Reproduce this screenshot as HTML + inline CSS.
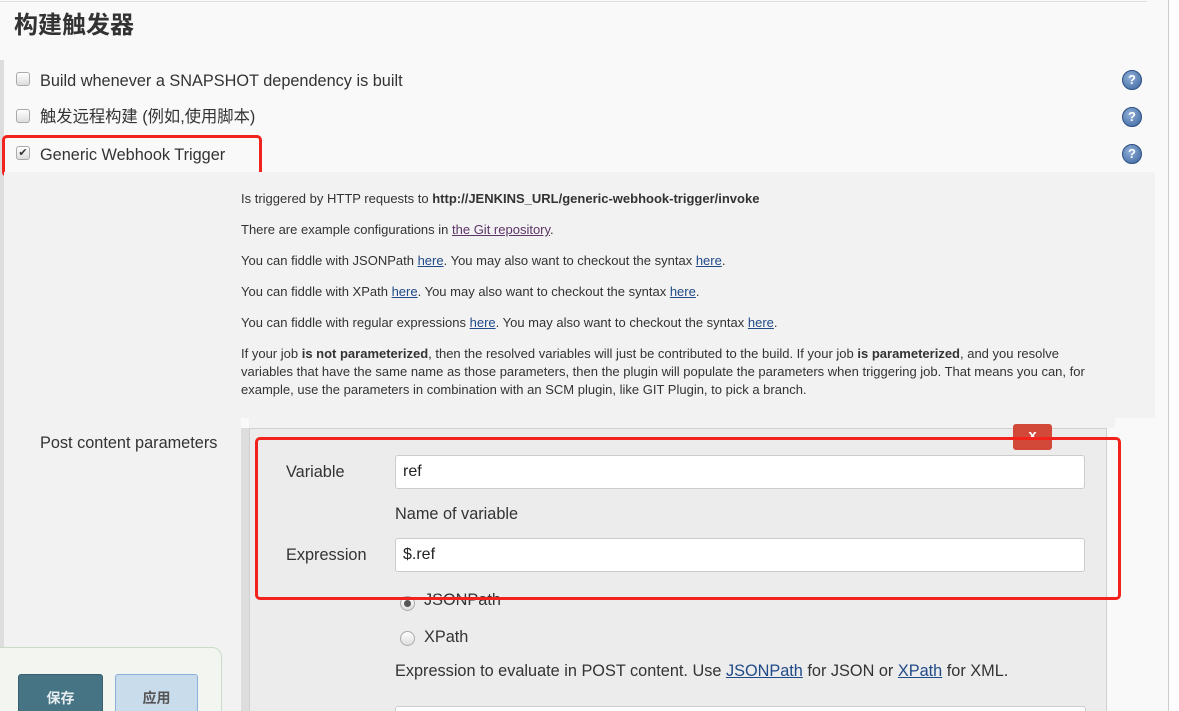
<!DOCTYPE html>
<html style="overflow:hidden;height:711px"><head><meta charset="utf-8"><style>
body{margin:0;width:1179px;height:711px;overflow:hidden;background:#f9f9f9;font-family:"Liberation Sans","Noto Sans CJK SC",sans-serif;color:#333;position:relative}
.a{position:absolute;white-space:nowrap;line-height:20px}
.cb{position:absolute;width:12px;height:12px;border:1px solid #aaa;border-radius:3px;background:linear-gradient(#fff,#ddd)}
.help{position:absolute;width:18px;height:18px;border-radius:50%;background:radial-gradient(circle at 40% 35%,#8fb0d8,#3a629c);border:1px solid #2d4f80;color:#fff;font:bold 13px "Liberation Sans",sans-serif;text-align:center;line-height:18px}
.h{font-size:13px;color:#333}
a{color:#204a87;text-decoration:underline}
.inp{position:absolute;left:395px;width:690px;height:34px;background:#fff;border:1px solid #ccc;border-radius:3px;font-size:16px;line-height:32px;padding-left:7px;box-sizing:border-box;color:#222}
.rad{position:absolute;width:13px;height:13px;border-radius:50%;border:1px solid #aaa;background:linear-gradient(#fff,#ddd)}
.t{font-size:16.3px}
</style></head><body>
<div class="a" style="left:0;top:1px;width:1147px;height:1px;background:#ddd"></div>
<div class="a" style="left:1168px;top:0;width:1px;height:711px;background:#ccc"></div>
<div class="a" style="left:1169px;top:0;width:10px;height:711px;background:#fdfdfd"></div>
<div class="a" style="left:0;top:60px;width:4px;height:651px;background:#ddd"></div>
<div class="a" style="left:14px;top:12px;font-size:24px;line-height:28px;font-weight:bold;color:#333">构建触发器</div>

<div class="cb" style="left:16px;top:72px"></div>
<div class="a t" style="left:40px;top:71px">Build whenever a SNAPSHOT dependency is built</div>
<div class="cb" style="left:16px;top:109px"></div>
<div class="a t" style="left:40px;top:106px;line-height:22px">触发远程构建 (例如,使用脚本)</div>
<div class="cb" style="left:16px;top:146px;font-size:11px;line-height:12px;text-align:center">✔</div>
<div class="a t" style="left:40px;top:145px">Generic Webhook Trigger</div>
<div class="a" style="left:2px;top:135px;width:254px;height:36px;border:3px solid #f2221c;border-radius:5px"></div>
<div class="help" style="left:1122px;top:70px">?</div>
<div class="help" style="left:1122px;top:107px">?</div>
<div class="help" style="left:1122px;top:144px">?</div>

<div class="a" style="left:4px;top:172px;width:1151px;height:246px;background:#f2f2f2"></div>
<div class="a" style="left:4px;top:418px;width:237px;height:293px;background:#f2f2f2"></div>
<div class="a" style="left:249px;top:418px;width:866px;height:10px;background:#f2f2f2"></div>
<div class="a h" style="left:241px;top:189px">Is triggered by HTTP requests to <b>http://JENKINS_URL/generic-webhook-trigger/invoke</b></div>
<div class="a h" style="left:241px;top:220px">There are example configurations in <a style="color:#5c3566">the Git repository</a>.</div>
<div class="a h" style="left:241px;top:251px">You can fiddle with JSONPath <a>here</a>. You may also want to checkout the syntax <a>here</a>.</div>
<div class="a h" style="left:241px;top:282px">You can fiddle with XPath <a>here</a>. You may also want to checkout the syntax <a>here</a>.</div>
<div class="a h" style="left:241px;top:313px">You can fiddle with regular expressions <a>here</a>. You may also want to checkout the syntax <a>here</a>.</div>
<div class="a h" style="left:241px;top:345px;line-height:18px">If your job <b>is not parameterized</b>, then the resolved variables will just be contributed to the build. If your job <b>is parameterized</b>, and you resolve<br>variables that have the same name as those parameters, then the plugin will populate the parameters when triggering job. That means you can, for<br>example, use the parameters in combination with an SCM plugin, like GIT Plugin, to pick a branch.</div>

<div class="a t" style="left:40px;top:433px">Post content parameters</div>
<div class="a" style="left:241px;top:428px;width:8px;height:283px;background:#ddd"></div>
<div class="a" style="left:249px;top:428px;width:856px;height:290px;background:#ececec;border:1px solid #d0d0d0"></div>
<div class="a" style="left:1013px;top:424px;width:39px;height:26px;background:#d24939;border-radius:3px;color:#fff;font:bold 15px 'Liberation Sans',sans-serif;text-align:center;line-height:24px">x</div>
<div class="a t" style="left:286px;top:462px">Variable</div>
<div class="inp" style="top:455px">ref</div>
<div class="a t" style="left:395px;top:504px">Name of variable</div>
<div class="a t" style="left:286px;top:545px">Expression</div>
<div class="inp" style="top:538px">$.ref</div>
<div class="rad" style="left:400px;top:596px"><div style="margin:3px;width:7px;height:7px;border-radius:50%;background:#555"></div></div>
<div class="a t" style="left:424px;top:590px">JSONPath</div>
<div class="a" style="left:255px;top:437px;width:860px;height:157px;border:3px solid #f2221c;border-radius:5px"></div>
<div class="rad" style="left:400px;top:631px"></div>
<div class="a t" style="left:424px;top:627px">XPath</div>
<div class="a t" style="left:395px;top:661px">Expression to evaluate in POST content. Use <a>JSONPath</a> for JSON or <a>XPath</a> for XML.</div>
<div class="a" style="left:395px;top:706px;width:689px;height:10px;background:#fff;border:1px solid #ccc;border-radius:3px"></div>

<div class="a" style="left:-10px;top:647px;width:230px;height:80px;background:#f3f6f0;border:1px solid #c8dcc8;border-radius:10px"></div>
<div class="a" style="left:18px;top:674px;width:83px;height:40px;background:#467484;border:1px solid #3a6070;border-radius:3px;color:#e8eef0;font-weight:bold;font-size:14px;text-align:center;line-height:46px">保存</div>
<div class="a" style="left:115px;top:674px;width:81px;height:40px;background:#c9dcec;border:1px solid #8ab0d8;border-radius:3px;color:#555;font-weight:bold;font-size:14px;text-align:center;line-height:46px">应用</div>
</body></html>
